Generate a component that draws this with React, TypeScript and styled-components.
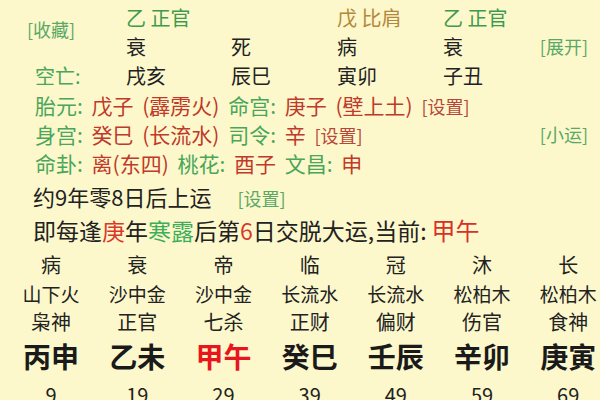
import React from "react";
import styled, { createGlobalStyle } from "styled-components";

const GlobalStyle = createGlobalStyle`
  html, body {
    margin: 0;
    padding: 0;
    background: #fcf8cc;
  }
  body {
    font-family: "Noto Sans CJK SC", "Noto Sans", sans-serif;
    color: #222;
  }
`;

const Page = styled.div`
  width: 600px;
  height: 400px;
  overflow: hidden;
  padding-top: 3px;
  box-sizing: border-box;
  background: #fcf8cc;
`;

const TopGrid = styled.div`
  display: grid;
  grid-template-columns: 99px 105px 106px 106px 1fr auto;
  grid-auto-rows: 29px;
  align-items: center;
  padding: 0 12px 0 27px;
  font-size: 20px;
  line-height: 29px;
`;

const Link = styled.span<{ $tone?: "green" | "red" }>`
  font-size: 18px;
  color: ${(p) => (p.$tone === "red" ? "#b8473a" : "#5aa866")};
  white-space: nowrap;
`;

const Collect = styled(Link)`
  grid-column: 1;
  grid-row: 1 / span 2;
  align-self: center;
  margin-bottom: 6px;
`;

const Cell = styled.span<{ $col: number; $row: number; $tone?: "green" | "brown" | "black" }>`
  grid-column: ${(p) => p.$col};
  grid-row: ${(p) => p.$row};
  white-space: pre;
  color: ${(p) =>
    p.$tone === "green" ? "#3f9a4d" : p.$tone === "brown" ? "#b4873a" : "#222"};
`;

const LabelCell = styled(Cell)`
  padding-left: 8px;
  color: #4aa65a;
`;

const SideLink = styled(Link)<{ $row: number }>`
  grid-column: 6;
  grid-row: ${(p) => p.$row};
  justify-self: end;
`;

const Info = styled.div`
  padding: 0 12px 0 35px;
  font-size: 21px;
  word-spacing: 4px;
`;

const InfoLine = styled.div`
  display: flex;
  align-items: center;
  height: 29px;
  white-space: pre;
`;

const Grow = styled.span`
  flex: 1;
`;

const Label = styled.span`
  color: #4aa65a;
`;

const Value = styled.span`
  color: #c0392b;
`;

const InlineLink = styled(Link)`
  word-spacing: 0;
`;

const Sentence = styled.div<{ $size: number; $top?: number }>`
  padding-left: 33px;
  height: 34px;
  font-size: ${(p) => p.$size}px;
  line-height: 34px;
  margin-top: ${(p) => p.$top ?? 0}px;
  white-space: pre;
  color: #222;
`;

const Red = styled.span`
  color: #d8392b;
`;

const Green = styled.span`
  color: #3fae5a;
`;

const Current = styled.span`
  font-size: 24px;
  line-height: 1;
  margin-left: 5px;
  color: #d8302a;
`;

const SetLink = styled(Link)`
  margin-left: 26px;
`;

const Dayun = styled.div`
  display: grid;
  grid-template-columns: repeat(7, 86.2px);
  padding-left: 8px;
  margin-top: 1px;
`;

const Column = styled.div`
  display: flex;
  flex-direction: column;
  align-items: center;
  white-space: nowrap;
  color: #222;
`;

const Stage = styled.div`
  height: 33px;
  line-height: 33px;
  font-size: 20px;
`;

const Nayin = styled.div`
  height: 26px;
  line-height: 26px;
  font-size: 19px;
`;

const God = styled.div`
  height: 29px;
  line-height: 29px;
  font-size: 20px;
`;

const Pillar = styled.div<{ $active?: boolean }>`
  height: 40px;
  line-height: 40px;
  font-size: 28px;
  font-weight: 700;
  color: ${(p) => (p.$active ? "#e8161c" : "#1a1a1a")};
`;

const Age = styled.div`
  height: 38px;
  line-height: 38px;
  font-size: 20px;
`;

const dayun = [
  { stage: "病", nayin: "山下火", god: "枭神", pillar: "丙申", age: 9 },
  { stage: "衰", nayin: "沙中金", god: "正官", pillar: "乙未", age: 19 },
  { stage: "帝", nayin: "沙中金", god: "七杀", pillar: "甲午", age: 29, active: true },
  { stage: "临", nayin: "长流水", god: "正财", pillar: "癸巳", age: 39 },
  { stage: "冠", nayin: "长流水", god: "偏财", pillar: "壬辰", age: 49 },
  { stage: "沐", nayin: "松柏木", god: "伤官", pillar: "辛卯", age: 59 },
  { stage: "长", nayin: "松柏木", god: "食神", pillar: "庚寅", age: 69 },
];

export default function App() {
  return (
    <>
      <GlobalStyle />
      <Page>
        <TopGrid>
          <Collect>[收藏]</Collect>
          <Cell $col={2} $row={1} $tone="green">乙 正官</Cell>
          <Cell $col={4} $row={1} $tone="brown">戊 比肩</Cell>
          <Cell $col={5} $row={1} $tone="green">乙 正官</Cell>

          <Cell $col={2} $row={2}>衰</Cell>
          <Cell $col={3} $row={2}>死</Cell>
          <Cell $col={4} $row={2}>病</Cell>
          <Cell $col={5} $row={2}>衰</Cell>
          <SideLink $row={2}>[展开]</SideLink>

          <LabelCell $col={1} $row={3}>空亡:</LabelCell>
          <Cell $col={2} $row={3}>戌亥</Cell>
          <Cell $col={3} $row={3}>辰巳</Cell>
          <Cell $col={4} $row={3}>寅卯</Cell>
          <Cell $col={5} $row={3}>子丑</Cell>
        </TopGrid>

        <Info>
          <InfoLine>
            <Grow>
              <Label>胎元:</Label> <Value>戊子 (霹雳火)</Value> <Label>命宫:</Label>{" "}
              <Value>庚子 (壁上土)</Value> <InlineLink $tone="red">[设置]</InlineLink>
            </Grow>
          </InfoLine>
          <InfoLine>
            <Grow>
              <Label>身宫:</Label> <Value>癸巳 (长流水)</Value> <Label>司令:</Label>{" "}
              <Value>辛</Value> <InlineLink $tone="red">[设置]</InlineLink>
            </Grow>
            <Link>[小运]</Link>
          </InfoLine>
          <InfoLine>
            <Grow>
              <Label>命卦:</Label> <Value>离(东四)</Value> <Label>桃花:</Label>{" "}
              <Value>酉子</Value> <Label>文昌:</Label> <Value>申</Value>
            </Grow>
          </InfoLine>
        </Info>

        <Sentence $size={22} $top={2}>
          约9年零8日后上运<SetLink>[设置]</SetLink>
        </Sentence>
        <Sentence $size={23}>
          即每逢<Red>庚</Red>年<Green>寒露</Green>后第<Red>6</Red>日交脱大运,当前:<Current>甲午</Current>
        </Sentence>

        <Dayun>
          {dayun.map((d) => (
            <Column key={d.pillar}>
              <Stage>{d.stage}</Stage>
              <Nayin>{d.nayin}</Nayin>
              <God>{d.god}</God>
              <Pillar $active={d.active}>{d.pillar}</Pillar>
              <Age>{d.age}</Age>
            </Column>
          ))}
        </Dayun>
      </Page>
    </>
  );
}
